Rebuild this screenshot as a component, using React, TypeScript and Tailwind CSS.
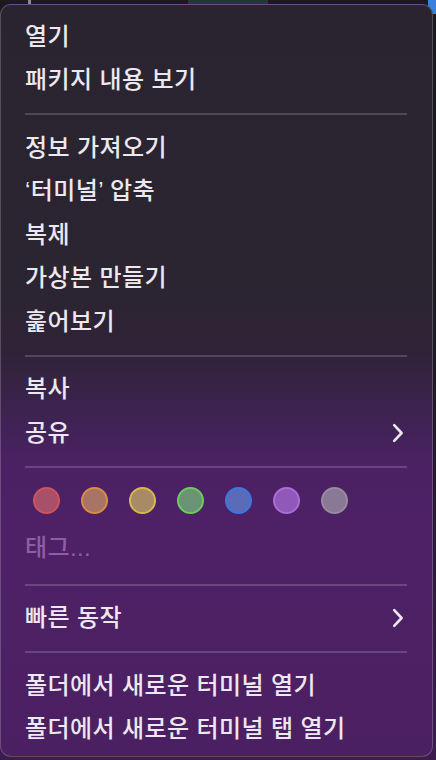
import React from "react";

const Item = ({ label, chevron = false }: { label: string; chevron?: boolean }) => (
  <div className="flex h-[43.5px] items-center justify-between pl-6 pr-[28px]">
    <span className="text-[24px] font-medium leading-none tracking-[0.4px] text-[#ece8ef]">{label}</span>
    {chevron && (
      <svg width="12" height="20" viewBox="0 0 12 20" fill="none">
        <path d="M2.2 2.2 L9.6 10 L2.2 17.8" stroke="#ece8ef" strokeWidth="2.6" strokeLinecap="round" strokeLinejoin="round" />
      </svg>
    )}
  </div>
);

const Sep = () => (
  <div className="flex h-[24px] items-center pl-6 pr-[25px]">
    <div className="h-[2px] w-full bg-white/[0.17]" />
  </div>
);

const tags = [
  { fill: "#a8506a", border: "#d0545c" },
  { fill: "#a87466", border: "#d88c48" },
  { fill: "#a88a66", border: "#d8b84c" },
  { fill: "#6a9474", border: "#6ccc60" },
  { fill: "#5a6cb8", border: "#3a78e0" },
  { fill: "#9058b8", border: "#b06ad8" },
  { fill: "#8a7896", border: "#968c9e" },
];

export default function App() {
  return (
    <div
      className="relative h-[760px] w-[436px] overflow-hidden bg-[linear-gradient(180deg,#1b1a1e_0%,#1e1b22_50%,#3c1c4e_100%)]"
      style={{ fontFamily: '"Liberation Sans", "Noto Sans CJK KR", sans-serif' }}
    >
      <div className="absolute right-0 top-0 h-[14px] w-[8px] bg-[#3b7fe0]" />
      <div className="absolute left-[28px] top-0 h-[4px] w-[3px] bg-[#8a8a8a]" />
      <div className="absolute left-[188px] top-0 h-[4px] w-[80px] bg-[#1f3a34]" />
      <div className="relative mt-[4px] flex h-[753px] w-[433px] flex-col rounded-[11px] border border-white/[0.2] bg-[linear-gradient(180deg,#2a2430_0%,#2b2431_38%,#2f2337_46%,#3d2350_54%,#4b2163_61%,#4e2166_70%,#4b2062_100%)] pt-[10px]">
        <Item label="열기" />
        <Item label="패키지 내용 보기" />
        <Sep />
        <Item label="정보 가져오기" />
        <Item label="‘터미널’ 압축" />
        <Item label="복제" />
        <Item label="가상본 만들기" />
        <Item label="훑어보기" />
        <Sep />
        <Item label="복사" />
        <Item label="공유" chevron />
        <Sep />
        <div className="flex h-[44px] items-center gap-[21px] pl-[32px]">
          {tags.map((t, i) => (
            <div
              key={i}
              className="h-[27px] w-[27px] rounded-full border-2"
              style={{ backgroundColor: t.fill, borderColor: t.border }}
            />
          ))}
        </div>
        <div className="flex h-[50px] items-center pl-6">
          <span className="text-[24px] font-medium leading-none tracking-[0.4px] text-[#8c5ea6]">태그...</span>
        </div>
        <Sep />
        <Item label="빠른 동작" chevron />
        <Sep />
        <Item label="폴더에서 새로운 터미널 열기" />
        <Item label="폴더에서 새로운 터미널 탭 열기" />
      </div>
    </div>
  );
}
